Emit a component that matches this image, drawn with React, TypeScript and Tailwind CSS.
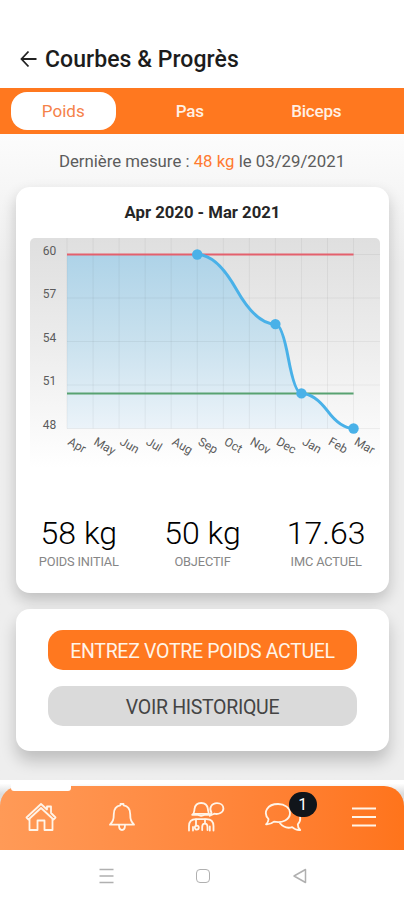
import React, { useState } from 'react';

const tabs = ['Poids', 'Pas', 'Biceps'];

const stats = [
  { value: '58 kg', label: 'POIDS INITIAL' },
  { value: '50 kg', label: 'OBJECTIF' },
  { value: '17.63', label: 'IMC ACTUEL' },
];

const months = ['Apr', 'May', 'Jun', 'Jul', 'Aug', 'Sep', 'Oct', 'Nov', 'Dec', 'Jan', 'Feb', 'Mar'];
const levels = [60, 57, 54, 51, 48];

const measures = [
  { month: 5, weight: 60 },
  { month: 8, weight: 55.2 },
  { month: 9, weight: 50.42 },
  { month: 11, weight: 48 },
];

const LEFT = 37;
const STEP = 26.05;
const TOP = 16.5;
const BOTTOM = 190.5;

const getX = (month: number) => LEFT + month * STEP;
const getY = (weight: number) => TOP + ((60 - weight) / 12) * (BOTTOM - TOP);

function WeightChart() {
  const points = measures.map((m) => ({ x: getX(m.month), y: getY(m.weight) }));

  // two quadratic halves between each pair of points
  const curve = points
    .slice(1)
    .map((p, i) => {
      const prev = points[i];
      const midX = (prev.x + p.x) / 2;
      const midY = (prev.y + p.y) / 2;
      return `Q${(midX + prev.x) / 2},${prev.y} ${midX},${midY} Q${(midX + p.x) / 2},${p.y} ${p.x},${p.y}`;
    })
    .join(' ');

  const start = `${points[0].x},${points[0].y}`;

  return (
    <svg width="350" height="230" viewBox="0 0 350 230" className="block">
      <defs>
        <linearGradient id="chartBg" x1="0" y1="0" x2="0" y2="1">
          <stop offset="0" stopColor="#dfdfdf" />
          <stop offset="0.45" stopColor="#ececec" />
          <stop offset="1" stopColor="#ffffff" />
        </linearGradient>
        <linearGradient id="chartArea" x1="0" y1="0" x2="0" y2="1">
          <stop offset="0" stopColor="#aed3e8" />
          <stop offset="0.5" stopColor="#c9e1ee" />
          <stop offset="1" stopColor="#ebf3f9" />
        </linearGradient>
      </defs>
      <rect width="350" height="230" rx="5" fill="url(#chartBg)" />
      <path d={`M${LEFT},${TOP} L${start} ${curve} L${getX(11)},${BOTTOM} L${LEFT},${BOTTOM} Z`} fill="url(#chartArea)" />

      <g stroke="#000000" strokeOpacity="0.05">
        {levels.map((level) => (
          <line key={level} x1={LEFT} x2="350" y1={getY(level)} y2={getY(level)} />
        ))}
        {months.map((month, i) => (
          <line key={month} x1={getX(i)} x2={getX(i)} y1="0" y2={BOTTOM} />
        ))}
      </g>

      <line x1={LEFT} x2={getX(11)} y1={TOP} y2={TOP} stroke="#e4606d" strokeWidth="2" />
      <line x1={LEFT} x2={getX(11)} y1={getY(50.42)} y2={getY(50.42)} stroke="#58a271" strokeWidth="2" />
      <path d={`M${start} ${curve}`} fill="none" stroke="#49b1e8" strokeWidth="3" />
      {points.map((p) => (
        <circle key={p.x} cx={p.x} cy={p.y} r="5.2" fill="#49b1e8" />
      ))}

      <g fill="#5c5c5c" fontSize="12">
        {levels.map((level) => (
          <text key={level} x="26.3" y={getY(level)} textAnchor="end">
            {level}
          </text>
        ))}
        {months.map((month, i) => (
          <text key={month} transform={`translate(${getX(i)} 206) rotate(30)`}>
            {month}
          </text>
        ))}
      </g>
    </svg>
  );
}

function HomeIcon() {
  return (
    <svg width="32" height="30" viewBox="0 0 32 30" fill="none" stroke="#fff4e8" strokeWidth="1.8" strokeLinejoin="round">
      <path d="M1.5 15.5 L16 2 L22 7.5 V4.5 H26 V11 L30.5 15.5 L28.5 17.5 L16 6 L3.5 17.5 Z" />
      <path d="M4.5 17 V28 H12.5 V18.5 H19.5 V28 H27.5 V17" />
    </svg>
  );
}

function BellIcon() {
  return (
    <svg width="28" height="30" viewBox="0 0 28 30" fill="none" stroke="#fff4e8" strokeWidth="1.8" strokeLinejoin="round">
      <path d="M12.5 3.3 V2 H15.5 V3.3 C20 4 22.2 7.5 22.2 12 C22.2 18 23.2 19.5 26 22.7 H2 C4.8 19.5 5.8 18 5.8 12 C5.8 7.5 8 4 12.5 3.3 Z" />
      <path d="M11 23 C11 26.8 12.2 28 14 28 C15.8 28 17 26.8 17 23" />
    </svg>
  );
}

function CoachIcon() {
  return (
    <svg width="38" height="32" viewBox="0 0 38 32" fill="none" stroke="#fff4e8" strokeWidth="1.8" strokeLinecap="round" strokeLinejoin="round">
      <path d="M5.2 13.8 C7.5 12.5 7.2 10.5 7.5 8 C8 4.2 10.6 2 14.2 2 C17.8 2 20.4 4.2 20.9 8 C21.2 10.5 21 12.5 23 13.8 H17.5 L14.2 14.8 L10.8 13.8 Z" />
      <path d="M7.5 12.8 H21.2" />
      <path d="M2 29.5 V25 C2 20.5 4.5 18.4 9 18.2 H19.5 C24 18.4 26.5 20.5 26.5 25 V29.5" />
      <path d="M9 18.5 V24.8 M6 29.5 V26 M22.8 29.5 V25.5" />
      <circle cx="9.8" cy="26.6" r="2" />
      <path d="M15.2 29 V26 C15.2 21.5 20.5 21.5 20.5 26 V29 M18 18.5 V22.2" />
      <path d="M24.5 11.8 C21.5 7.5 24.5 2.2 30 2.2 C33.8 2.2 36.4 4.5 36.4 7.4 C36.4 11.5 31.5 13.8 27.2 12.7 L22.8 14.8 Z" />
    </svg>
  );
}

function ChatIcon() {
  return (
    <svg width="38" height="30" viewBox="0 0 38 30" fill="none" stroke="#fff4e8" strokeWidth="1.8" strokeLinecap="round" strokeLinejoin="round">
      <path d="M4.5 17 C-1.5 10.5 3.5 2 14 2 C21 2 26 6 26 11 C26 17.5 18.5 21.5 10 19.7 C7.8 21.7 5 22.5 2 22.3 C4 20.5 4.6 19 4.5 17 Z" />
      <path d="M16 21.3 C19 25 24 26.4 28.2 25.2 C30.3 27.3 33 28.2 36.2 28 C34 26 33.7 24.5 33.8 22.3 C37.5 18.5 37 13 32.5 10" />
    </svg>
  );
}

function MenuIcon() {
  return (
    <svg width="26" height="22" viewBox="0 0 26 22" stroke="#fff4e8" strokeWidth="1.9">
      <path d="M1 2.5 H25 M1 11 H25 M1 19.5 H25" />
    </svg>
  );
}

function App() {
  const [activeTab, setActiveTab] = useState('Poids');

  return (
    <div className="w-[404px] h-[900px] overflow-hidden flex flex-col bg-white font-[Roboto,'Liberation_Sans',sans-serif]">
      <header className="h-[88px] shrink-0 flex items-end px-5 pb-[14px]">
        <div className="flex items-center">
          <svg width="17" height="18" viewBox="0 0 17 18" fill="none" stroke="#222222" strokeWidth="1.8" className="mb-[3px]">
            <path d="M8.5 1.5 L1.5 9 L8.5 16.5 M1.5 9 H16.5" />
          </svg>
          <h1 className="ml-2 text-[23px] leading-7 font-medium text-[#1c1c1c] tracking-[0.05px] whitespace-nowrap">Courbes &amp; Progrès</h1>
        </div>
      </header>

      <nav className="h-[46px] shrink-0 flex items-center bg-[#ff781f]">
        {tabs.map((tab) => (
          <div key={tab} className="w-[126.5px] px-[10.5px]">
            <button
              onClick={() => setActiveTab(tab)}
              className={`w-full h-[38px] pt-[2px] rounded-[16px] text-[17px] ${
                activeTab === tab ? 'bg-white text-[#f5824a]' : 'text-[#fff0e4] font-medium tracking-[-0.2px]'
              }`}
            >
              {tab}
            </button>
          </div>
        ))}
      </nav>

      <main className="h-[646px] shrink-0 px-4 bg-linear-to-b from-[#fcfcfc] via-[#eeeeee] via-20% to-[#eeeeee]">
        <p className="h-[53px] pt-[15px] text-center text-[16.8px] leading-6 text-[#5c5c5c] whitespace-nowrap">
          Dernière mesure : <span className="text-[#ff7a30]">48 kg</span> le 03/29/2021
        </p>

        <section className="w-[373px] h-[406px] rounded-[14px] bg-white px-[14px] shadow-[0_7px_15px_rgba(0,0,0,0.2)]">
          <h2 className="h-[51px] pt-[14px] text-center text-[16.7px] leading-6 font-bold text-[#262626]">Apr 2020 - Mar 2021</h2>
          <WeightChart />
          <div className="-mx-[14px] px-px pt-[47px] flex">
            {stats.map((stat) => (
              <div key={stat.label} className="flex-1 text-center">
                <div className="text-[32px] leading-9 font-light text-black">{stat.value}</div>
                <div className="mt-[3px] text-[12.8px] leading-4 text-[#868686] tracking-[-0.15px]">{stat.label}</div>
              </div>
            ))}
          </div>
        </section>

        <section className="mt-4 w-[373px] h-[142px] rounded-[14px] bg-white pt-[21px] px-8 flex flex-col gap-4 shadow-[0_10px_16px_rgba(0,0,0,0.2)]">
          <button className="h-[40px] w-[309px] pt-[4px] rounded-[15px] bg-[#ff781f] text-[#fff4e8] text-[19.5px] tracking-[-0.3px] whitespace-nowrap">
            ENTREZ VOTRE POIDS ACTUEL
          </button>
          <button className="h-[40px] w-[309px] pt-[4px] rounded-[15px] bg-[#dadada] text-[#444444] text-[19.5px] tracking-[-0.3px]">VOIR HISTORIQUE</button>
        </section>
      </main>

      <footer className="relative h-[70px] shrink-0 pt-1.5 bg-linear-to-b from-white from-5% to-[#dddddd] to-20%">
        <div className="h-[64px] pb-[2px] rounded-t-[20px] bg-linear-to-r from-[#ff9a57] to-[#ff741b] grid grid-cols-5 items-center justify-items-center">
          <div className="pl-px">
            <HomeIcon />
          </div>
          <div className="pl-px">
            <BellIcon />
          </div>
          <div className="pl-2">
            <CoachIcon />
          </div>
          <div className="relative">
            <ChatIcon />
            <span className="absolute left-[25px] -top-[10px] w-[28px] h-[25px] rounded-full bg-[#11151a] text-white text-[16px] flex items-center justify-center">1</span>
          </div>
          <MenuIcon />
        </div>
        <div className="absolute left-[11px] top-[2px] w-[60px] h-[9px] rounded-[3px] bg-white" />
      </footer>

      <div className="h-[50px] shrink-0 bg-white flex items-center pl-[99px] pt-[2px]">
        <svg width="15" height="16" viewBox="0 0 15 16" stroke="#b0b0b0" strokeWidth="1.5">
          <path d="M0.5 1.5 H14.5 M0.5 8 H14.5 M0.5 14.5 H14.5" />
        </svg>
        <div className="ml-[82px] w-[14px] h-[14px] rounded-[4px] border-[1.5px] border-[#b0b0b0]" />
        <svg className="ml-[83px]" width="14" height="16" viewBox="0 0 14 16" fill="none" stroke="#b0b0b0" strokeWidth="1.5" strokeLinejoin="round">
          <path d="M12.5 1.5 V14.5 L1 8 Z" />
        </svg>
      </div>
    </div>
  );
}

export default App;
